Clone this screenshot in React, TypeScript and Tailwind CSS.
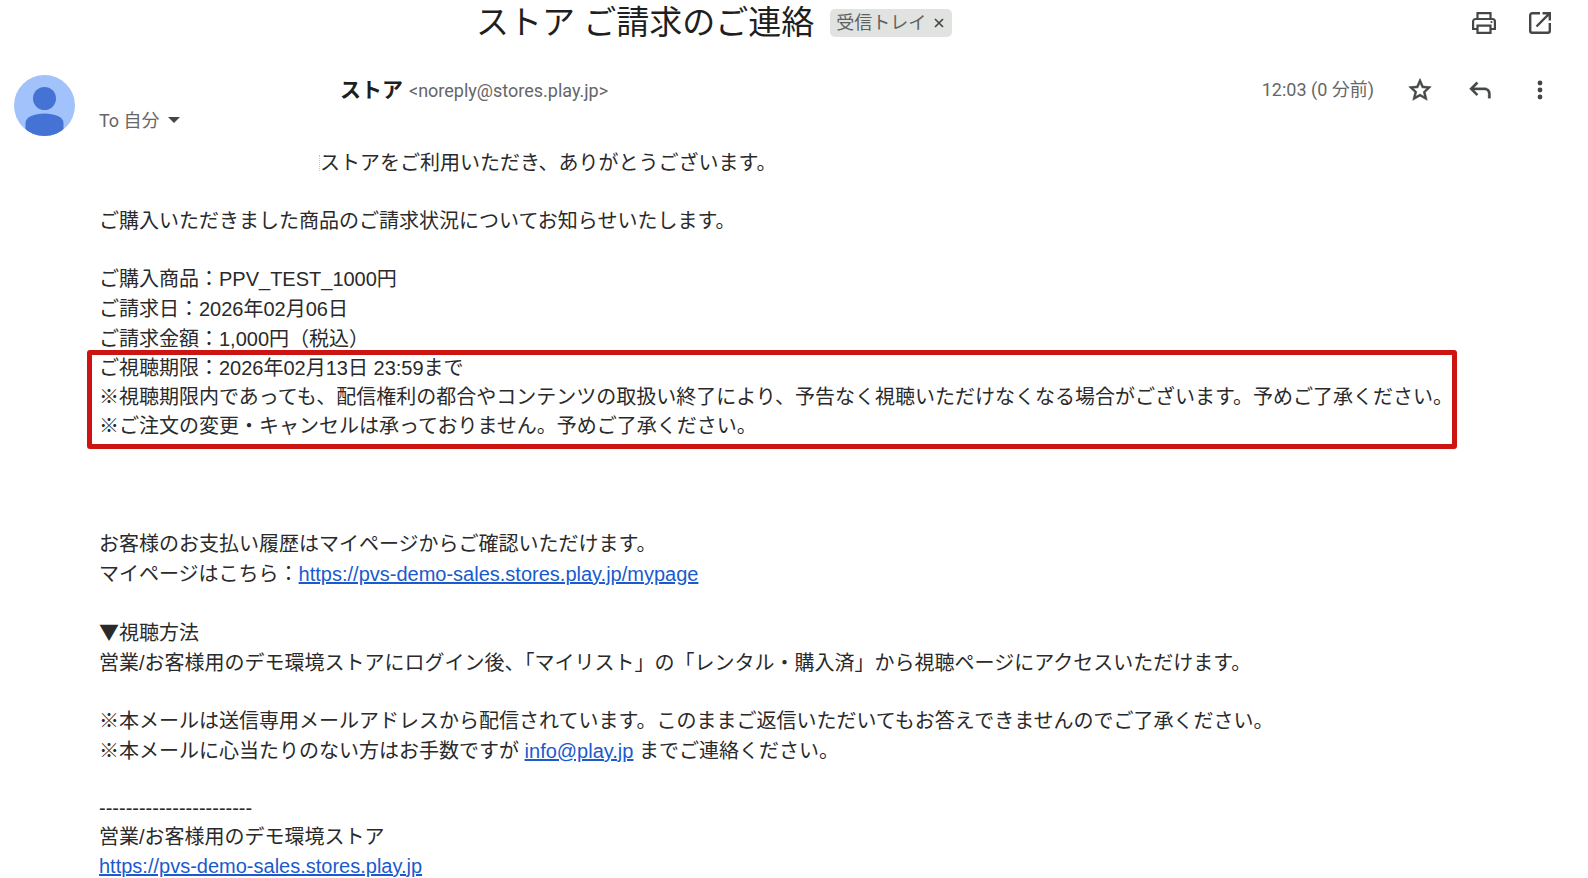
import type { ReactNode } from "react";

const BODY_FONT = "font-['Liberation_Sans','Noto_Sans_CJK_JP',sans-serif]";
const HEADER_FONT = "font-['Roboto','Noto_Sans_CJK_JP',sans-serif]";

function IconButton({ label, children }: { label: string; children: ReactNode }) {
  return (
    <button type="button" aria-label={label} className="flex size-7 items-center justify-center text-[#444746]">
      {children}
    </button>
  );
}

function MailLink({ href, children }: { href: string; children: ReactNode }) {
  return (
    <a href={href} className="text-[#1a5acd] underline">
      {children}
    </a>
  );
}

function PrintIcon() {
  return (
    <svg viewBox="0 0 28 28" className="size-7 shrink-0" fill="none" stroke="currentColor" strokeWidth="2.2">
      <path d="M7.5 10V4.1h13V10M7.5 20H3.1v-7.5a2.5 2.5 0 0 1 2.5-2.5h16.8a2.5 2.5 0 0 1 2.5 2.5V20h-4.4" />
      <path d="M7.5 16.6h13v7.3h-13z" />
      <circle cx="21.5" cy="13" r="1.1" fill="currentColor" stroke="none" />
    </svg>
  );
}

function OpenIcon() {
  return (
    <svg viewBox="0 0 28 28" className="size-7 shrink-0" fill="none" stroke="currentColor" strokeWidth="2.4">
      <path d="M14 4.2H6.2a2 2 0 0 0-2 2v15.6a2 2 0 0 0 2 2h15.6a2 2 0 0 0 2-2V14" />
      <path d="M16.5 4.2h7.3v7.3M23.8 4.2 10.5 17.5" />
    </svg>
  );
}

function StarIcon() {
  return (
    <svg viewBox="0 0 24 24" className="size-7 shrink-0" fill="currentColor" stroke="currentColor" strokeWidth="0.5">
      <path d="m21.6 9.24-6.79-.62L12 2.2 9.19 8.63 2.4 9.24l5.06 4.73L5.82 20.8 12 17.27l6.18 3.53-1.63-6.83 5.05-4.73ZM12 15.4l-3.76 2.27 1-4.28-3.32-2.88 4.38-.38L12 6.1l1.71 4.04 4.38.38-3.32 2.88 1 4.28L12 15.4Z" />
    </svg>
  );
}

function ReplyIcon() {
  return (
    <svg viewBox="0 0 24 24" className="size-7 shrink-0" fill="currentColor" stroke="currentColor" strokeWidth="0.3">
      <path d="M19 19v-4c0-.83-.29-1.54-.88-2.13A2.9 2.9 0 0 0 16 12H6.83l3.59 3.6L9 17l-6-6 6-6 1.43 1.4L6.83 10H16c1.38 0 2.56.49 3.54 1.46A4.8 4.8 0 0 1 21 15v4h-2Z" />
    </svg>
  );
}

function MoreIcon() {
  return (
    <svg viewBox="0 0 28 28" className="size-7 shrink-0" fill="currentColor">
      <circle cx="14" cy="7" r="2.4" />
      <circle cx="14" cy="14" r="2.4" />
      <circle cx="14" cy="21" r="2.4" />
    </svg>
  );
}

function Avatar() {
  return (
    <svg viewBox="0 0 61 61" className="size-[61px] shrink-0" role="img" aria-label="送信者">
      <clipPath id="avatar-clip">
        <circle cx="30.5" cy="30.5" r="30.5" />
      </clipPath>
      <g clipPath="url(#avatar-clip)">
        <rect width="61" height="61" fill="#a1c2fa" />
        <circle cx="30.5" cy="23.5" r="11.5" fill="#4573d5" />
        <path d="M11.5 61V48c0-6 9-9.5 19-9.5s19 3.5 19 9.5v13z" fill="#4573d5" />
      </g>
    </svg>
  );
}

export default function App() {
  return (
    <div className={`min-h-screen bg-white text-[#2a2a2a] ${BODY_FONT}`}>
      <header className={`flex h-[46px] items-center pr-[34px] pl-[476px] ${HEADER_FONT}`}>
        <h1 className="text-[33px] leading-10 whitespace-nowrap text-[#1f1f1f]">ストア ご請求のご連絡</h1>
        <span className="ml-4 flex h-7 items-center gap-2 rounded-[5px] bg-[#e1e3e1] pr-2 pl-[6px] text-[18px] leading-7 whitespace-nowrap text-[#5e615f]">
          受信トレイ
          <button type="button" aria-label="受信トレイのラベルを削除">
            <svg viewBox="0 0 10 10" className="size-[10px]" fill="none" stroke="#444746" strokeWidth="1.7">
              <path d="M1 1l8 8M9 1L1 9" />
            </svg>
          </button>
        </span>
        <div className="ml-auto flex gap-7">
          <IconButton label="印刷"><PrintIcon /></IconButton>
          <IconButton label="新しいウィンドウで開く"><OpenIcon /></IconButton>
        </div>
      </header>

      <div className="flex items-start gap-6 pt-[29px] pr-[34px] pl-[14px]">
        <Avatar />
        <main className="min-w-0 flex-1">
          <div className={`flex h-[30px] items-center pl-[241px] ${HEADER_FONT}`}>
            <p className="flex items-baseline gap-[6px] whitespace-nowrap text-[#666666]">
              <b className="text-[21px] leading-7 text-[#1f1f1f]">ストア</b>
              <span className="text-[18px] leading-7">&lt;noreply@stores.play.jp&gt;</span>
            </p>
            <time className="ml-auto text-[18px] leading-7 whitespace-nowrap text-[#666666]">12:03 (0 分前)</time>
            <div className="ml-8 flex gap-8">
              <IconButton label="スター"><StarIcon /></IconButton>
              <IconButton label="返信"><ReplyIcon /></IconButton>
              <IconButton label="その他"><MoreIcon /></IconButton>
            </div>
          </div>
          <div className={`flex h-[30px] items-center gap-2 text-[18px] text-[#666666] ${HEADER_FONT}`}>
            To 自分
            <button type="button" aria-label="詳細を表示">
              <svg viewBox="0 0 12 6" className="h-[6px] w-3" fill="#444746"><path d="M0 0h12L6 6z" /></svg>
            </button>
          </div>

          <div className="pt-[13px] text-[20px] leading-[30px] whitespace-nowrap">
            <p className="flex items-center pl-[220px]">
              <span className="h-4 border-l border-dotted border-[#c5c5c5]" />
              ストアをご利用いただき、ありがとうございます。
            </p>
            <p className="mt-7">ご購入いただきました商品のご請求状況についてお知らせいたします。</p>
            <p className="mt-7">
              ご購入商品：PPV_TEST_1000円<br />
              ご請求日：2026年02月06日<br />
              ご請求金額：1,000円（税込）
            </p>
            <div className="relative w-fit leading-[29px]">
              <div className="absolute -top-1 -right-1 -left-3 h-[99px] rounded-[3px] border-5 border-[#cc1412]" />
              <p>
                ご視聴期限：2026年02月13日 23:59まで<br />
                ※視聴期限内であっても、配信権利の都合やコンテンツの取扱い終了により、予告なく視聴いただけなくなる場合がございます。予めご了承ください。<br />
                ※ご注文の変更・キャンセルは承っておりません。予めご了承ください。
              </p>
            </div>
            <p className="mt-[88px]">
              お客様のお支払い履歴はマイページからご確認いただけます。<br />
              マイページはこちら：<MailLink href="https://pvs-demo-sales.stores.play.jp/mypage">https://pvs-demo-sales.stores.play.jp/mypage</MailLink>
            </p>
            <p className="mt-7">
              <span className="font-['Noto_Sans_CJK_JP',sans-serif]">▼</span>視聴方法<br />
              営業/お客様用のデモ環境ストアにログイン後、「マイリスト」の「レンタル・購入済」から視聴ページにアクセスいただけます。
            </p>
            <p className="mt-7">
              ※本メールは送信専用メールアドレスから配信されています。このままご返信いただいてもお答えできませんのでご了承ください。<br />
              ※本メールに心当たりのない方はお手数ですが <MailLink href="mailto:info@play.jp">info@play.jp</MailLink> までご連絡ください。
            </p>
            <div className="mt-7 leading-[29px]">
              -----------------------<br />
              営業/お客様用のデモ環境ストア<br />
              <MailLink href="https://pvs-demo-sales.stores.play.jp">https://pvs-demo-sales.stores.play.jp</MailLink>
            </div>
          </div>
        </main>
      </div>
    </div>
  );
}
